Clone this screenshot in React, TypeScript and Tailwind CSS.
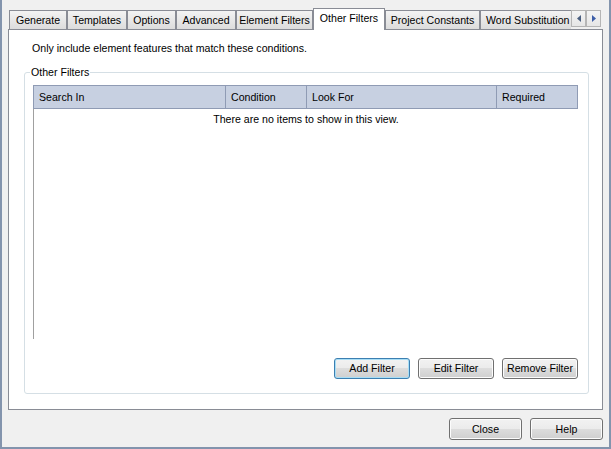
import React from "react";

const tabs = [
  { label: "Generate", w: "w-[58px]" },
  { label: "Templates", w: "w-[60px]" },
  { label: "Options", w: "w-[49px]" },
  { label: "Advanced", w: "w-[60px]" },
  { label: "Element Filters", w: "w-[77px]" },
  { label: "Other Filters", w: "w-[72px]", active: true },
  { label: "Project Constants", w: "w-[95px]" },
];

const btn =
  "flex items-center justify-center rounded-[3px] border border-[#707070] bg-[linear-gradient(#f2f2f2,#ebebeb_50%,#dddddd_50%,#cfcfcf)] shadow-[inset_0_0_0_1px_#fcfcfc]";

function Arrow({ dir }: { dir: "left" | "right" }) {
  return (
    <div className="flex h-[17px] w-[15px] items-center justify-center border border-[#b5b5b5] bg-[linear-gradient(#f4f4f4,#e6e6e6)]">
      <svg width="4" height="7" viewBox="0 0 4 7">
        {dir === "left" ? (
          <polygon points="4,0 4,7 0,3.5" fill="#4a5f80" />
        ) : (
          <polygon points="0,0 0,7 4,3.5" fill="#3d5ea8" />
        )}
      </svg>
    </div>
  );
}

export default function App() {
  return (
    <div className="flex h-[449px] w-[611px] flex-col border-x-2 border-b-2 border-[#8394ad] bg-[#f0f0f0] pl-[6px] pt-[8px] font-['Liberation_Sans',Arial,sans-serif] text-[10.6px] leading-[13px] text-black">
      {/* Tab strip */}
      <div className="relative z-10 flex h-[21px] w-[595px] items-end pl-[1px]">
        {tabs.map((t) =>
          t.active ? (
            <div
              key={t.label}
              className={`${t.w} -mb-px flex h-[22px] items-center justify-center border border-b-0 border-[#898c95] bg-white pb-[2px]`}
            >
              {t.label}
            </div>
          ) : (
            <div
              key={t.label}
              className={`${t.w} flex h-[19px] items-center justify-center border border-b-0 border-[#898c95] bg-linear-to-b from-[#f3f3f3] to-[#dcdcdc] pt-px`}
            >
              {t.label}
            </div>
          )
        )}
        <div className="flex h-[19px] w-[91px] items-center overflow-hidden whitespace-nowrap border border-b-0 border-r-0 border-[#898c95] bg-linear-to-b from-[#f3f3f3] to-[#dcdcdc] pl-[5px] pt-px">
          Word Substitution
        </div>
        <div className="mb-[2px] flex">
          <Arrow dir="left" />
          <Arrow dir="right" />
        </div>
      </div>

      {/* Tab panel */}
      <div className="flex h-[381px] w-[595px] flex-col border border-[#898c95] bg-white pb-[15px] pl-[15px] pr-[14px] pt-[12px]">
        <div className="pl-[8px]">Only include element features that match these conditions.</div>

        <div className="relative mt-[17px] flex h-[322px] w-[565px] flex-col rounded-[3px] border border-[#d5dfe5] pl-[8px] pr-[10px] pt-[12px] pb-[14px]">
          <div className="absolute -top-[7px] left-[5px] bg-white px-[1px]">Other Filters</div>

          {/* List view */}
          <div className="flex h-[254px] w-[545px] flex-col">
            <div className="flex h-[24px] border border-[#8f9bb4] bg-[#c7d0e1]">
              <div className="flex w-[192px] items-center border-r border-[#8f9bb4] pl-[5px]">Search In</div>
              <div className="flex w-[81px] items-center border-r border-[#8f9bb4] pl-[5px]">Condition</div>
              <div className="flex w-[190px] items-center border-r border-[#8f9bb4] pl-[5px]">Look For</div>
              <div className="flex flex-1 items-center pl-[5px]">Required</div>
            </div>
            <div className="flex-1 border-l border-[#a0a0a0] pt-[4px] text-center">
              There are no items to show in this view.
            </div>
          </div>

          <div className="mt-[19px] flex w-[545px] justify-end gap-[8px]">
            <button className="flex h-[21px] w-[76px] items-center justify-center rounded-[3px] border border-[#3c7fb1] bg-[linear-gradient(#f2f2f2,#ebebeb_50%,#dddddd_50%,#cfcfcf)] shadow-[inset_0_0_0_1px_#a8def6]">
              Add Filter
            </button>
            <button className={`${btn} h-[21px] w-[76px]`}>Edit Filter</button>
            <button className={`${btn} h-[21px] w-[76px]`}>Remove Filter</button>
          </div>
        </div>
      </div>

      {/* Dialog buttons */}
      <div className="mt-[8px] flex w-[595px] justify-end gap-[8px]">
        <button className={`${btn} h-[22px] w-[73px]`}>Close</button>
        <button className={`${btn} h-[22px] w-[73px]`}>Help</button>
      </div>
    </div>
  );
}
